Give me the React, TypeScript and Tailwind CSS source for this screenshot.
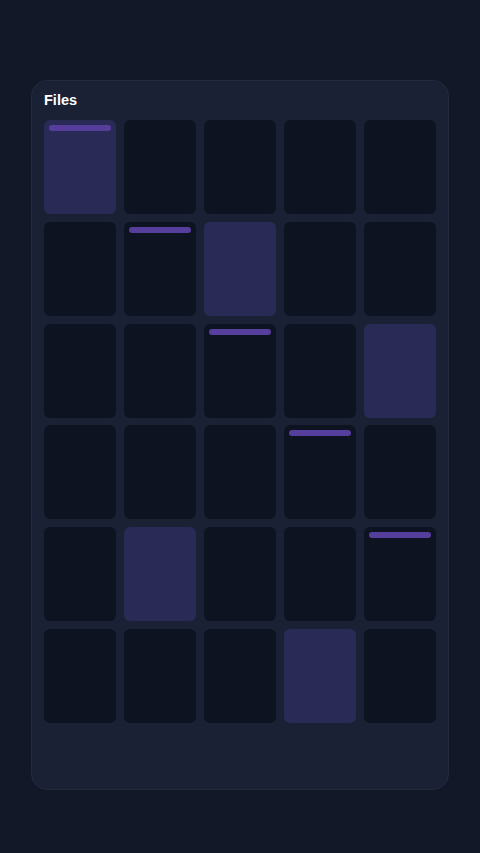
import React from "react";

const highlighted = new Set(["0-0", "1-2", "2-4", "4-1", "5-3"]);
const bars = new Set(["0-0", "1-1", "2-2", "3-3", "4-4"]);

export default function App() {
  const rows = [0, 1, 2, 3, 4, 5];
  const cols = [0, 1, 2, 3, 4];
  return (
    <div className="min-h-[853px] w-full bg-[#121827] pt-[80px] px-[31px]" style={{ fontFamily: '"Liberation Sans", Arial, sans-serif' }}>
      <div className="h-[710px] rounded-[16px] border border-[#222a3c] bg-[#1a2134] px-[12px] pt-[9px]">
        <h1 className="text-[14.5px] leading-[20px] font-bold text-white">Files</h1>
        <div className="mt-[10px] grid grid-cols-5 gap-x-[8px] gap-y-[7.8px]">
          {rows.map((r) =>
            cols.map((c) => {
              const key = `${r}-${c}`;
              const hl = highlighted.has(key);
              return (
                <div
                  key={key}
                  className={`relative h-[94px] rounded-[6px] ${hl ? "bg-[#2a2a56]" : "bg-[#0d1321]"}`}
                >
                  {bars.has(key) && (
                    <div className="absolute left-[5px] right-[5px] top-[5px] h-[6px] rounded-full bg-[#563f9c]" />
                  )}
                </div>
              );
            })
          )}
        </div>
      </div>
    </div>
  );
}
